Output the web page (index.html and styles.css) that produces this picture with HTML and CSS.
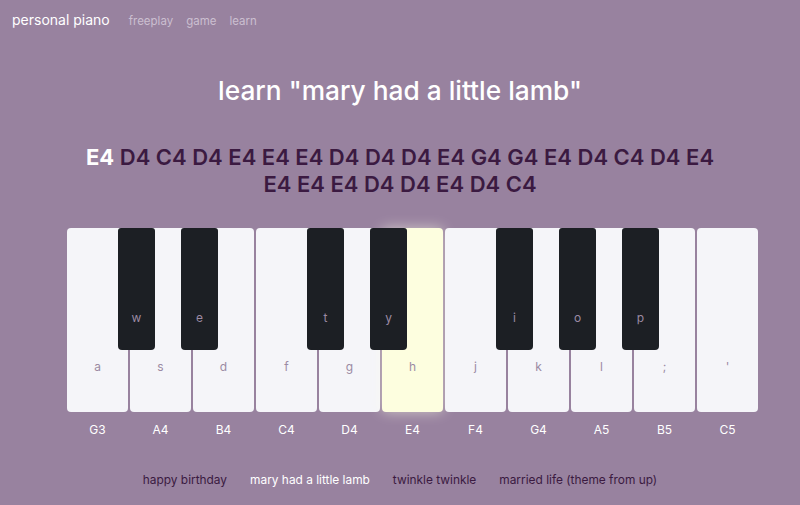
FILE: index.html
```html
<!DOCTYPE html>
<html>
<head>
<meta charset="utf-8">
<link rel="stylesheet" href="styles.css">
</head>
<body>
<nav class="nav">
  <span class="brand">personal piano</span>
  <a class="link">freeplay</a>
  <a class="link">game</a>
  <a class="link">learn</a>
</nav>
<h1 class="title">learn "mary had a little lamb"</h1>
<div class="notes">
  <div class="line"><span class="cur">E4</span> D4 C4 D4 E4 E4 E4 D4 D4 D4 E4 G4 G4 E4 D4 C4 D4 E4</div>
  <div class="line">E4 E4 E4 D4 D4 E4 D4 C4</div>
</div>
<div class="keyboard">
  <div class="col"><div class="white"><span class="wl">a</span><div class="black"><span>w</span></div></div><div class="name">G3</div></div>
  <div class="col"><div class="white"><span class="wl">s</span><div class="black"><span>e</span></div></div><div class="name">A4</div></div>
  <div class="col"><div class="white"><span class="wl">d</span></div><div class="name">B4</div></div>
  <div class="col"><div class="white"><span class="wl">f</span><div class="black"><span>t</span></div></div><div class="name">C4</div></div>
  <div class="col"><div class="white"><span class="wl">g</span><div class="black"><span>y</span></div></div><div class="name">D4</div></div>
  <div class="col"><div class="white lit"><span class="wl">h</span></div><div class="name">E4</div></div>
  <div class="col"><div class="white"><span class="wl">j</span><div class="black"><span>i</span></div></div><div class="name">F4</div></div>
  <div class="col"><div class="white"><span class="wl">k</span><div class="black"><span>o</span></div></div><div class="name">G4</div></div>
  <div class="col"><div class="white"><span class="wl">l</span><div class="black"><span>p</span></div></div><div class="name">A5</div></div>
  <div class="col"><div class="white"><span class="wl">;</span></div><div class="name">B5</div></div>
  <div class="col"><div class="white"><span class="wl">'</span></div><div class="name">C5</div></div>
</div>
<div class="songs">
  <span class="song">happy birthday</span>
  <span class="song active">mary had a little lamb</span>
  <span class="song">twinkle twinkle</span>
  <span class="song">married life (theme from up)</span>
</div>
</body>
</html>
```
FILE: styles.css
```css
html, body {
  margin: 0;
  padding: 0;
}
body {
  background: #98829f;
  font-family: Inter, "Noto Sans", sans-serif;
  width: 800px;
  height: 505px;
  overflow: hidden;
}
.nav {
  display: flex;
  align-items: baseline;
  gap: 13px;
  padding: 11px 12px 0 12px;
  height: 30px;
  box-sizing: border-box;
}
.brand {
  color: #ffffff;
  font-size: 14px;
  margin-right: 6px;
}
.link {
  color: #cbbfd0;
  font-size: 11.5px;
}
.title {
  margin: 43px 0 0 0;
  text-align: center;
  color: #ffffff;
  font-size: 26.3px;
  font-weight: 500;
  line-height: 36px;
}
.notes {
  margin-top: 35px;
  text-align: center;
  color: #3b1a41;
  font-size: 22px;
  font-weight: 600;
  line-height: 27px;
}
.cur {
  color: #ffffff;
  font-weight: 700;
}
.keyboard {
  display: flex;
  gap: 2px;
  margin: 30px 0 0 67px;
}
.col {
  display: flex;
  flex-direction: column;
  width: 61px;
}
.white {
  position: relative;
  height: 184px;
  background: #f5f5f9;
  border-radius: 4px;
  display: flex;
  align-items: flex-end;
  justify-content: center;
}
.white.lit {
  background: #fdfedf;
  box-shadow: 0 0 14px rgba(255, 255, 235, 0.55);
}
.wl {
  color: #9b8aa3;
  font-size: 12px;
  line-height: 14px;
  margin-bottom: 38px;
}
.black {
  position: absolute;
  top: 0;
  left: 51px;
  width: 37px;
  height: 122px;
  background: #1c1f24;
  border-radius: 3px 3px 4px 4px;
  z-index: 2;
  display: flex;
  align-items: flex-end;
  justify-content: center;
}
.black span {
  color: #9b8aa3;
  font-size: 12px;
  line-height: 14px;
  margin-bottom: 25px;
}
.name {
  text-align: center;
  color: #ffffff;
  font-size: 12px;
  line-height: 14px;
  margin-top: 11px;
}
.songs {
  display: flex;
  justify-content: center;
  gap: 23px;
  margin-top: 35px;
  font-size: 11.9px;
  color: #3b1a41;
}
.song.active {
  color: #ffffff;
}
```
